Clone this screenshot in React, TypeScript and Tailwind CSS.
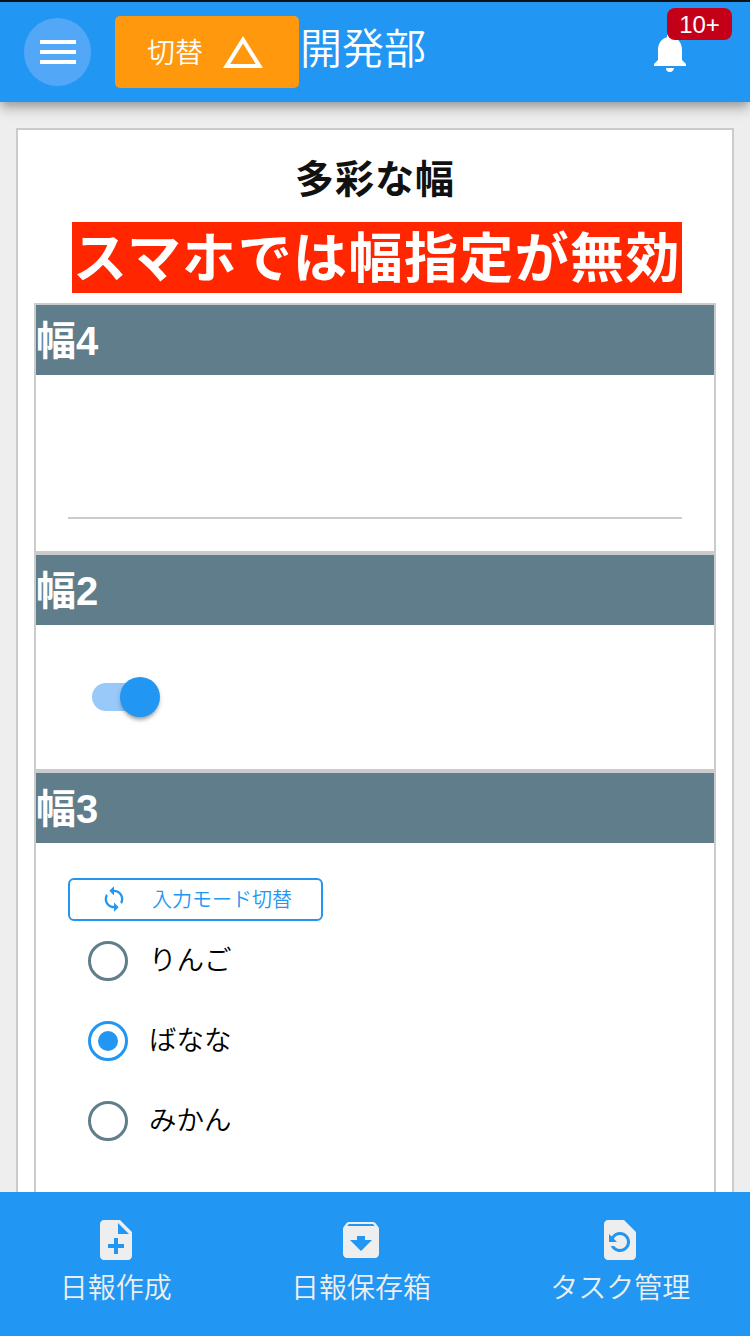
import type { ReactNode } from "react";
import {
  MdArchive,
  MdChangeHistory,
  MdMenu,
  MdNoteAdd,
  MdNotifications,
  MdRestorePage,
  MdSync,
} from "react-icons/md";

function Section({ title, children }: { title: string; children: ReactNode }) {
  return (
    <section className="border-2 border-[#cbcbcb]">
      <h2 className="h-[70px] bg-[#607d8b] text-[40px] leading-[73px] font-bold text-white">{title}</h2>
      {children}
    </section>
  );
}

function Radio({ label, checked = false }: { label: string; checked?: boolean }) {
  return (
    <label className="flex h-20 items-center gap-[21px] pl-5">
      <span
        className={
          checked
            ? "flex size-10 items-center justify-center rounded-full border-[3px] border-[#2196f3]"
            : "flex size-10 items-center justify-center rounded-full border-[3px] border-[#607d8b]"
        }
      >
        {checked && <span className="size-5 rounded-full bg-[#2196f3]" />}
      </span>
      <span className="text-[27.5px] leading-10 font-[350] text-black">{label}</span>
    </label>
  );
}

function NavItem({ icon, label }: { icon: ReactNode; label: string }) {
  return (
    <a className="flex flex-col items-center">
      {icon}
      <span className="text-[28px] leading-[50px] font-[350]">{label}</span>
    </a>
  );
}

export default function App() {
  return (
    <div className="flex h-[1336px] w-[750px] flex-col overflow-hidden bg-[#eee] font-['Liberation_Sans','Noto_Sans_CJK_JP',sans-serif]">
      <header className="relative z-10 flex h-[102px] shrink-0 border-t-2 border-[#111] bg-[#2196f3] pl-6 text-white shadow-[0_4px_8px_-2px_rgba(0,0,0,0.2),0_8px_10px_rgba(0,0,0,0.14),0_2px_20px_rgba(0,0,0,0.12)]">
        <button className="mt-4 flex h-[68px] w-[67px] items-center justify-center rounded-full bg-[#52a7f7]">
          <MdMenu size={48} />
        </button>
        <button className="mt-3.5 ml-6 flex h-[72px] w-[184px] items-center rounded-[5px] bg-[#ff980c] pl-8 text-[28px] font-[350]">
          <span className="pt-[3px]">切替</span>
          <MdChangeHistory size={48} className="ml-4" />
        </button>
        <h1 className="mt-4 ml-px text-[42px] leading-[64px] font-[350]">開発部</h1>
        <div className="relative mt-[26px] mr-14 ml-auto size-12">
          <MdNotifications size={48} />
          <span className="absolute -top-5 left-[21px] flex h-8 w-[65px] items-center justify-center rounded-lg bg-[#c40018] pt-0.5 text-2xl">
            10+
          </span>
        </div>
      </header>

      <main className="mx-4 mt-[26px] min-h-0 flex-1 overflow-hidden border-2 border-b-0 border-[#cbcbcb] bg-white px-4">
        <h1 className="mt-5 h-[60px] text-center text-[39px] leading-[59px] font-bold tracking-[1px] text-[#111]">多彩な幅</h1>
        <div className="mt-3 ml-[38px] h-[71px] w-[610px] bg-[#ff2600] text-center text-[54px] leading-[75px] font-bold tracking-[1.4px] whitespace-nowrap text-white">
          スマホでは幅指定が無効
        </div>
        <div className="mt-2.5">
          <Section title="幅4">
            <div className="h-[176px] px-8">
              <div className="h-36 border-b-2 border-[#cbcbcb]" />
            </div>
          </Section>
          <Section title="幅2">
            <div className="flex h-36 items-center pl-14">
              <div className="flex h-7 w-[68px] items-center justify-end rounded-full bg-[linear-gradient(90deg,#98c9f9_56px,transparent_56px)]">
                <span className="size-10 shrink-0 rounded-full bg-[#2196f3] shadow-[0_4px_4px_-2px_rgba(0,0,0,0.4),0_2px_6px_rgba(0,0,0,0.1)]" />
              </div>
            </div>
          </Section>
          <Section title="幅3">
            <div className="h-[400px] px-8 pt-[35px]">
              <button className="flex h-[43px] w-[255px] items-center rounded-md border-2 border-[#2196f3] pl-[30px] text-xl font-[350] text-[#2196f3]">
                <MdSync size={28} className="mr-6 -translate-y-px" />
                <span className="pt-px">入力モード切替</span>
              </button>
              <Radio label="りんご" />
              <Radio label="ばなな" checked />
              <Radio label="みかん" />
            </div>
          </Section>
        </div>
      </main>

      <nav className="flex h-36 shrink-0 justify-around bg-[#2196f3] pt-6 text-[#eee]">
        <NavItem icon={<MdNoteAdd size={48} />} label="日報作成" />
        <NavItem icon={<MdArchive size={48} />} label="日報保存箱" />
        <NavItem icon={<MdRestorePage size={48} />} label="タスク管理" />
      </nav>
    </div>
  );
}
